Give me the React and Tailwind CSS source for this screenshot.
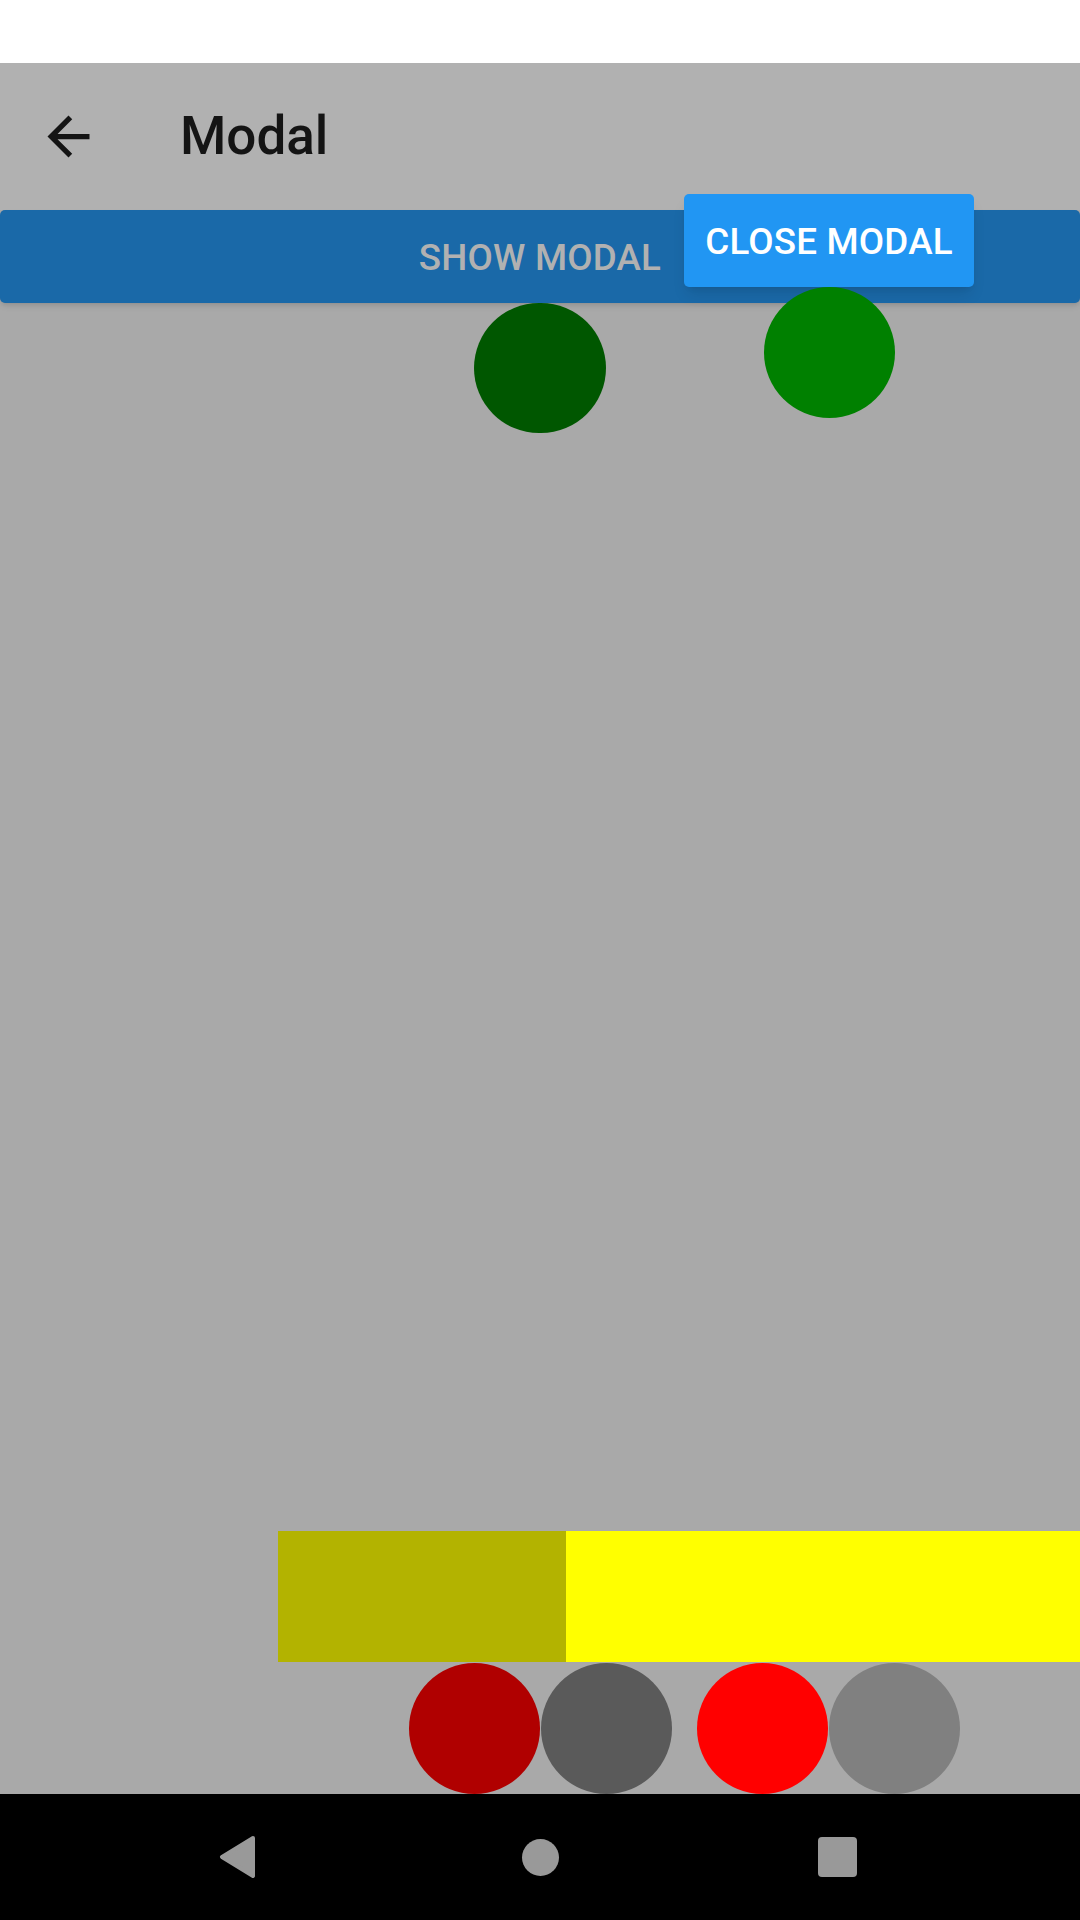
import React from 'react';

const font = { fontFamily: 'Roboto, "Noto Sans", sans-serif' };

const ArrowBack = () => (
  <svg viewBox="0 0 24 24" className="w-[63px] h-[63px]" fill="#141414">
    <path d="M20 11H7.83l5.59-5.59L12 4l-8 8 8 8 1.41-1.41L7.83 13H20v-2z" />
  </svg>
);

const Dot = ({ color }) => (
  <div className={`w-[131px] h-[131px] rounded-full shrink-0 ${color}`} />
);

export default function App() {
  return (
    <div className="w-[1080px] h-[1920px] flex flex-col relative overflow-hidden" style={font}>
      {/* Status bar */}
      <div className="h-[63px] bg-white shrink-0" />

      {/* Toolbar */}
      <div className="h-[147px] shrink-0 bg-[#b1b1b1] flex items-center">
        <div className="ml-[37px]">
          <ArrowBack />
        </div>
        <h1 className="ml-[80px] text-[53px] font-medium text-[#141414] leading-none">Modal</h1>
      </div>

      {/* Content */}
      <div className="flex-1 bg-[#a9a9a9] flex flex-col">
        <div className="h-[93px] shrink-0 bg-[#1a69a8] rounded-[5px] shadow-md flex items-center justify-center">
          <span className="pt-[3px] text-[36.75px] font-medium tracking-[0.005em] text-[#b1b1b1] uppercase">Show Modal</span>
        </div>

        <div className="ml-[474px] w-[132px] h-[130px] rounded-full bg-[#005700]" />

        <div className="flex-1" />

        <div className="h-[131px] shrink-0 flex pl-[278px]">
          <div className="w-[288px] bg-[#b3b300]" />
          <div className="flex-1 bg-[#ffff00]" />
        </div>

        <div className="h-[131px] mt-[1px] shrink-0 flex pl-[409px]">
          <Dot color="bg-[#b00000]" />
          <Dot color="bg-[#5a5a5a] ml-[1px]" />
          <Dot color="bg-[#ff0000] ml-[25px]" />
          <Dot color="bg-[#808080] ml-[1px]" />
        </div>
      </div>

      {/* Nav bar */}
      <div className="h-[126px] shrink-0 bg-black flex items-center pl-[219px]">
        <svg width="37" height="42" viewBox="0 0 37 42">
          <path d="M34 2 L3 21 L34 40 Z" fill="#999" stroke="#999" strokeWidth="4" strokeLinejoin="round" />
        </svg>
        <div className="ml-[266px] w-[37px] h-[37px] rounded-full bg-[#999]" />
        <div className="ml-[259px] w-[39px] h-[40px] rounded-[4px] bg-[#999]" />
      </div>

      {/* Modal content, over the dimmed page */}
      <div className="absolute left-[684px] top-[194px] w-[290px] flex flex-col items-center">
        <button className="w-[290px] h-[93px] bg-[#2196f3] rounded-[5px] shadow-lg flex items-center justify-center">
          <span className="pt-[2px] text-[36.75px] font-medium tracking-[0.005em] text-white uppercase">Close Modal</span>
        </button>
        <div className="w-[131px] h-[131px] rounded-full bg-[#008000]" />
      </div>
    </div>
  );
}
